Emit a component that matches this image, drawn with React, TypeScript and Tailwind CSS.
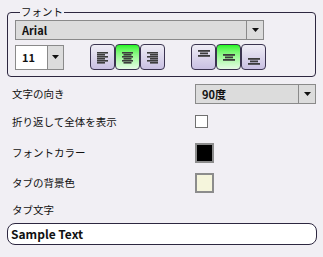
import { ReactNode } from 'react';

const jp = "font-['Noto_Sans_CJK_JP','Noto_Sans',sans-serif]";

const Caret = () => (
    <svg width="7" height="4" viewBox="0 0 7 4">
        <path d="M0 0h7L3.5 4z" fill="#111" />
    </svg>
);

type Align = 'left' | 'center' | 'right';

// horizontal alignment glyph: six striped lines
const HIcon = ({ align }: { align: Align }) => {
    const rows = [11, 8, 11, 8, 11, 8];
    return (
        <svg width="13" height="13" viewBox="0 0 13 13">
            {rows.map((w, i) => {
                const x = align === 'left' ? 1 : align === 'right' ? 12 - w : (13 - w) / 2;
                return <rect key={i} x={x} y={1 + i * 2} width={w} height="1.6" fill="#3c3c3c" />;
            })}
        </svg>
    );
};

// vertical alignment glyph: three lines at top / middle / bottom
const VIcon = ({ pos }: { pos: 'top' | 'middle' | 'bottom' }) => {
    const base = pos === 'top' ? 1 : pos === 'middle' ? 5 : 9;
    const rows = [12, 8, 12];
    return (
        <svg width="14" height="17" viewBox="0 0 14 17">
            {rows.map((w, i) => (
                <rect key={i} x={(14 - w) / 2} y={base + i * 2.5} width={w} height="1.8" fill="#3c3c3c" />
            ))}
        </svg>
    );
};

const ToolButton = ({ active, children }: { active?: boolean; children: ReactNode }) => (
    <div
        className={
            'w-[25px] h-[26px] rounded-[4px] border border-[#3b3450] flex items-center justify-center ' +
            (active
                ? 'bg-gradient-to-b from-[#1cf51c] to-[#e6fbe6]'
                : 'bg-gradient-to-b from-[#efedf5] to-[#c9c0e2]')
        }
    >
        {children}
    </div>
);

const Select = ({ value, className }: { value: string; className: string }) => (
    <div className={'flex bg-[#dcdcdc] border border-[#8a8a8a] ' + className}>
        <div className="flex-1 flex items-center pl-[6px] text-[11px] font-bold text-[#111]">{value}</div>
        <div className="w-[17px] border-l border-[#8a8a8a] flex items-center justify-center">
            <Caret />
        </div>
    </div>
);

const Row = ({ label, className, children }: { label: string; className: string; children: ReactNode }) => (
    <div className={'flex items-center ' + className}>
        <div className="w-[188px] pl-[5px] text-[10.5px] text-[#111]">{label}</div>
        {children}
    </div>
);

export default function App() {
    return (
        <div className={'w-[323px] h-[257px] bg-[#f1eff4] pt-[5px] px-[7px] ' + jp}>
            <fieldset className="w-[309px] h-[72px] border border-[#2d2740] rounded-[4px] px-[7px]">
                <legend className="ml-[5px] px-[1px] text-[10.5px] leading-[14px] text-[#111]">フォント</legend>
                <Select value="Arial" className="w-[249px] h-[20px] mt-[1px]" />
                <div className="flex items-center mt-[4px] h-[26px]">
                    <div className="w-[49px] h-[25px] flex border border-[#8a8a8a] bg-white">
                        <div className="flex-1 flex items-center pl-[6px] text-[11px] font-bold text-[#111]">11</div>
                        <div className="w-[16px] bg-[#dcdcdc] border-l border-[#8a8a8a] flex items-center justify-center">
                            <Caret />
                        </div>
                    </div>
                    <div className="flex ml-[26px]">
                        <ToolButton><HIcon align="left" /></ToolButton>
                        <ToolButton active><HIcon align="center" /></ToolButton>
                        <ToolButton><HIcon align="right" /></ToolButton>
                    </div>
                    <div className="flex ml-[26px]">
                        <ToolButton><VIcon pos="top" /></ToolButton>
                        <ToolButton active><VIcon pos="middle" /></ToolButton>
                        <ToolButton><VIcon pos="bottom" /></ToolButton>
                    </div>
                </div>
            </fieldset>

            <Row label="文字の向き" className="mt-[7px] h-[20px]">
                <Select value="90度" className="w-[121px] h-[20px]" />
            </Row>
            <Row label="折り返して全体を表示" className="mt-[11px] h-[13px]">
                <div className="w-[13px] h-[13px] bg-white border border-[#707070]" />
            </Row>
            <Row label="フォントカラー" className="mt-[15px] h-[20px]">
                <div className="w-[19px] h-[20px] bg-black border-2 border-[#8c8c8c]" />
            </Row>
            <Row label="タブの背景色" className="mt-[10px] h-[20px]">
                <div className="w-[19px] h-[20px] bg-[#f5f5dc] border-2 border-[#8c8c8c]" />
            </Row>
            <div className="mt-[10px] h-[14px] pl-[5px] text-[10.5px] leading-[14px] text-[#111]">タブ文字</div>
            <div className="mt-[6px] w-[310px] h-[22px] rounded-[8px] border border-[#2d2740] bg-white flex items-center pl-[3px] text-[12px] font-bold text-[#111]">
                Sample Text
            </div>
        </div>
    );
}
